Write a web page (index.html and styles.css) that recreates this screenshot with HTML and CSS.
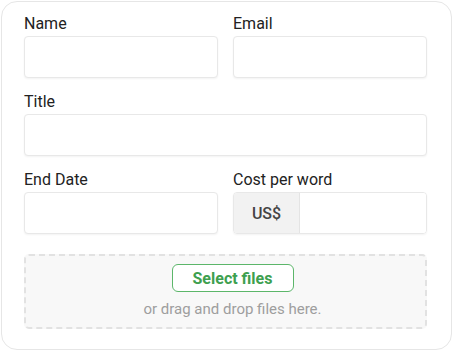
FILE: index.html
```html
<!DOCTYPE html>
<html lang="en">
<head>
    <meta charset="UTF-8">
    <title>New Project</title>
    <link rel="stylesheet" href="styles.css">
</head>
<body>
    <form class="card">
        <div class="row two">
            <div class="field">
                <label for="name">Name</label>
                <input type="text" id="name">
            </div>
            <div class="field">
                <label for="email">Email</label>
                <input type="text" id="email">
            </div>
        </div>
        <div class="row">
            <div class="field">
                <label for="title">Title</label>
                <input type="text" id="title">
            </div>
        </div>
        <div class="row two">
            <div class="field">
                <label for="end-date">End Date</label>
                <input type="text" id="end-date">
            </div>
            <div class="field">
                <label for="cost">Cost per word</label>
                <div class="input-group">
                    <span class="addon">US$</span>
                    <input type="text" id="cost">
                </div>
            </div>
        </div>
        <div class="dropzone">
            <button type="button" class="select-btn">Select files</button>
            <p class="drop-hint">or drag and drop files here.</p>
        </div>
    </form>
</body>
</html>
```

FILE: styles.css
```css
body {
    margin: 0;
    padding: 1px;
    font-family: 'Roboto', 'Liberation Sans', sans-serif;
    color: #222;
    background-color: #fff;
}
.card {
    box-sizing: border-box;
    width: 451px;
    height: 349px;
    padding: 12px 24px 0 22px;
    border: 1px solid #e6e6e6;
    border-radius: 16px;
    background-color: #fff;
}
.row {
    display: grid;
    grid-template-columns: 1fr;
    margin-bottom: 14px;
}
.row.two {
    grid-template-columns: 1fr 1fr;
    column-gap: 15px;
}
.field {
    display: flex;
    flex-direction: column;
}
label {
    font-size: 16px;
    line-height: 20px;
    margin-bottom: 2px;
}
input[type="text"] {
    box-sizing: border-box;
    height: 42px;
    width: 100%;
    padding: 0 12px;
    border: 1px solid #e8e8e8;
    border-radius: 4px;
    box-shadow: 0 1px 2px rgba(0, 0, 0, 0.05);
    font-family: inherit;
    font-size: 16px;
    outline: none;
}
.input-group {
    box-sizing: border-box;
    display: flex;
    height: 42px;
    border: 1px solid #e8e8e8;
    border-radius: 4px;
    box-shadow: 0 1px 2px rgba(0, 0, 0, 0.05);
    overflow: hidden;
}
.addon {
    width: 65px;
    display: flex;
    align-items: center;
    justify-content: center;
    background-color: #f2f2f2;
    border-right: 1px solid #e4e4e4;
    color: #444;
    font-size: 16px;
    font-weight: 500;
}
.input-group input[type="text"] {
    flex: 1;
    height: 100%;
    border: none;
    border-radius: 0;
    box-shadow: none;
}
.dropzone {
    box-sizing: border-box;
    height: 75px;
    margin-top: 20px;
    padding: 8px 0 0 14px;
    border: 2px dashed #e2e2e2;
    border-radius: 5px;
    background-color: #f8f8f8;
    display: flex;
    flex-direction: column;
    align-items: center;
}
.select-btn {
    box-sizing: border-box;
    width: 122px;
    height: 28px;
    padding: 0;
    border: 1.5px solid #5cb66a;
    border-radius: 6px;
    background-color: #fff;
    color: #3ea04f;
    font-family: inherit;
    font-size: 16px;
    font-weight: 700;
    cursor: pointer;
}
.drop-hint {
    margin: 8px 0 0;
    font-size: 15px;
    line-height: 18px;
    color: #9e9e9e;
}
```
